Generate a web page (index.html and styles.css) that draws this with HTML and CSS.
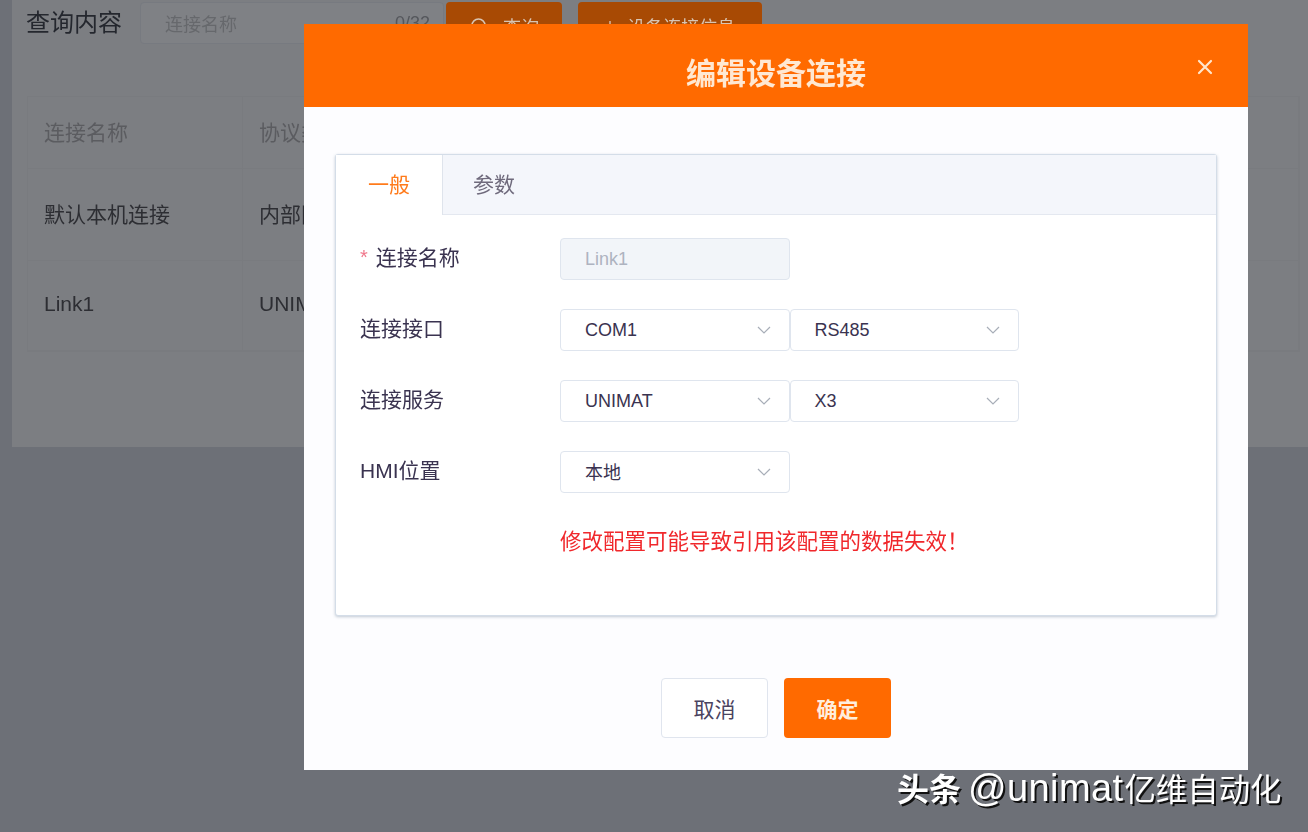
FILE: index.html
```html
<!DOCTYPE html>
<html lang="zh-CN">
<head>
<meta charset="utf-8">
<title>编辑设备连接</title>
<link rel="stylesheet" href="styles.css">
</head>
<body>
<div class="page">
  <main class="panel">
    <div class="toolbar">
      <span class="query-label">查询内容</span>
      <div class="search-input"><span class="placeholder">连接名称</span><span class="counter">0/32</span></div>
      <button class="bg-btn btn-search">
        <svg class="search-icon" viewBox="0 0 20 20" width="20" height="20"><circle cx="9.5" cy="9.5" r="6.5" fill="none" stroke="currentColor" stroke-width="1.5"/><path d="M14.5 14.5 18 18" fill="none" stroke="currentColor" stroke-width="1.5"/></svg>
        <span>查询</span>
      </button>
      <button class="bg-btn btn-add"><span class="plus">+</span><span>设备连接信息</span></button>
    </div>
    <div class="table">
      <div class="cell head">连接名称</div><div class="cell head">协议类型</div><div class="cell head"></div>
      <div class="cell strong">默认本机连接</div><div class="cell strong">内部网络</div><div class="cell"></div>
      <div class="cell strong">Link1</div><div class="cell strong">UNIMAT</div><div class="cell"></div>
    </div>
  </main>
</div>

<section class="modal">
  <header class="modal-head">
    <h1 class="modal-title">编辑设备连接</h1>
    <svg class="close" viewBox="0 0 16 16" width="16" height="16"><path d="M2 2 14 14M14 2 2 14" fill="none" stroke="#ffe6cc" stroke-width="2.2" stroke-linecap="round"/></svg>
  </header>
  <div class="modal-body">
    <div class="tabs">
      <div class="tab-bar">
        <div class="tab active">一般</div>
        <div class="tab second">参数</div>
      </div>
      <div class="tab-content">
        <div class="row">
          <label class="label"><span class="req">*</span>连接名称</label>
          <div class="field disabled">Link1</div>
        </div>
        <div class="row">
          <label class="label">连接接口</label>
          <div class="field">COM1<svg class="chev" viewBox="0 0 14 8" width="14" height="8"><path d="M1 1 7 7 13 1"/></svg></div>
          <div class="field">RS485<svg class="chev" viewBox="0 0 14 8" width="14" height="8"><path d="M1 1 7 7 13 1"/></svg></div>
        </div>
        <div class="row">
          <label class="label">连接服务</label>
          <div class="field">UNIMAT<svg class="chev" viewBox="0 0 14 8" width="14" height="8"><path d="M1 1 7 7 13 1"/></svg></div>
          <div class="field">X3<svg class="chev" viewBox="0 0 14 8" width="14" height="8"><path d="M1 1 7 7 13 1"/></svg></div>
        </div>
        <div class="row">
          <label class="label">HMI位置</label>
          <div class="field"><span class="cjk-value">本地</span><svg class="chev" viewBox="0 0 14 8" width="14" height="8"><path d="M1 1 7 7 13 1"/></svg></div>
        </div>
        <p class="warning">修改配置可能导致引用该配置的数据失效！</p>
      </div>
    </div>
    <div class="actions">
      <button class="btn btn-cancel">取消</button>
      <button class="btn btn-ok">确定</button>
    </div>
  </div>
</section>

<div class="watermark"><b class="wm-brand">头条</b><span class="wm-latin">@unimat</span><span class="wm-cjk">亿维自动化</span></div>
</body>
</html>
```
FILE: styles.css
```css
* { box-sizing: border-box; }
html, body { margin: 0; height: 100%; }
body {
  width: 1308px;
  height: 832px;
  overflow: hidden;
  background: #6d7077;
  font-family: "Liberation Sans", "Noto Sans CJK SC", sans-serif;
  color: #3a3350;
}
.page { height: 447px; padding-left: 12px; }
.panel {
  height: 447px;
  background: #7c7e82;
  padding: 2px 0 0 14px;
  filter: blur(0.7px);
  overflow: hidden;
}
.toolbar { display: flex; align-items: center; height: 42px; }
.query-label { width: 114px; font-size: 24px; color: #24272e; margin-bottom: 6px; }
.search-input {
  width: 304px;
  height: 42px;
  display: flex;
  align-items: center;
  justify-content: space-between;
  padding: 0 13px 0 24px;
  border: 1px solid #777a80;
  border-radius: 4px;
  background: #7f8185;
  font-size: 18px;
}
.placeholder { color: #66686c; }
.counter { color: #55575c; font-size: 18px; }
.bg-btn {
  height: 42px;
  display: flex;
  align-items: center;
  justify-content: center;
  padding: 6px 0 0;
  border: 0;
  border-radius: 4px;
  background: #a84a04;
  color: #d9c5b3;
  font: inherit;
  font-size: 18px;
}
.btn-search { width: 116px; margin-left: 2px; gap: 14px; }
.btn-add { width: 184px; margin-left: 16px; gap: 12px; }
.search-icon { flex: none; }
.table {
  margin: 52px 8px 0 1px;
  display: grid;
  grid-template-columns: 215px 216px 1fr;
  grid-template-rows: 72px 92px 90px;
  border: 1px solid #797b7f;
}
.cell {
  display: flex;
  align-items: center;
  padding: 0 0 3px 16px;
  font-size: 21px;
  border-right: 1px solid #797b7f;
  border-bottom: 1px solid #797b7f;
  white-space: nowrap;
}
.cell.head { color: #5b5c60; }
.cell.strong { color: #2d2e33; }

.modal {
  position: fixed;
  left: 304px;
  top: 24px;
  width: 944px;
  height: 746px;
  background: #fff;
  border-radius: 2px;
  display: flex;
  flex-direction: column;
}
.modal-head {
  position: relative;
  height: 83px;
  flex: none;
  padding-top: 10px;
  background: #ff6a00;
  display: flex;
  align-items: center;
  justify-content: center;
}
.modal-title {
  margin: 0;
  font-size: 30px;
  font-weight: 700;
  color: #ffe8d2;
  font-family: "Noto Sans CJK SC", sans-serif;
  line-height: 1;
  filter: blur(0.5px);
}
.close { position: absolute; right: 35px; top: 35px; }
.modal-body { flex: 1; padding: 47px 31px 0; display: flex; flex-direction: column; background: #fdfdff; }
.tabs {
  height: 462px;
  flex: none;
  border: 1px solid #d4dde8;
  border-radius: 3px;
  box-shadow: 0 1px 3px rgba(120, 140, 160, .45);
  display: flex;
  flex-direction: column;
  background: #fff;
}
.tab-bar {
  height: 60px;
  flex: none;
  display: flex;
  background: #f4f6fb;
  border-bottom: 1px solid #e4e8f0;
}
.tab {
  width: 107px;
  padding-left: 32px;
  font-size: 21px;
  line-height: 60px;
  color: #6f6a7c;
  filter: blur(0.4px);
}
.tab.second { padding-left: 30px; }
.tab.active {
  background: #fff;
  color: #ff7a1a;
  border-right: 1px solid #dfe4ec;
  height: 60px;
}
.tab-content { padding: 23px 0 0 24px; display: flex; flex-direction: column; gap: 29px; }
.row { display: flex; height: 42px; align-items: center; }
.label {
  width: 200px;
  flex: none;
  font-size: 21px;
  color: #3a3350;
  white-space: nowrap;
  margin-bottom: 6px;
  filter: blur(0.4px);
}
.req { color: #f0788c; font-size: 20px; margin-right: 8px; vertical-align: 1px; }
.field {
  width: 229.5px;
  height: 42px;
  flex: none;
  display: flex;
  align-items: center;
  justify-content: space-between;
  padding: 0 18px 0 24px;
  border: 1px solid #dfe5ee;
  border-radius: 4px;
  font-size: 18px;
  color: #3a3350;
  background: #fff;
}
.field.disabled { background: #f2f5f9; color: #aeb3c0; }
.cjk-value { margin-bottom: 3px; }
.chev { fill: none; stroke: #a8aeb8; stroke-width: 1.2; flex: none; }
.warning {
  margin: 5px 0 0 200px;
  font-size: 21.5px;
  line-height: 30px;
  color: #f0282c;
  white-space: nowrap;
  filter: blur(0.4px);
}
.actions { display: flex; justify-content: center; gap: 16px; margin-top: 62px; }
.btn {
  width: 107px;
  height: 60px;
  border-radius: 4px;
  font-family: inherit;
  font-size: 21px;
}
.btn-cancel { background: #fff; border: 1px solid #e0e5ee; color: #4a4360; }
.btn-ok { background: #ff6a00; border: 0; color: #ffeedd; font-weight: 700; }
.watermark {
  position: fixed;
  left: 897px;
  top: 766px;
  display: flex;
  align-items: baseline;
  line-height: 44px;
  color: #fff;
  white-space: nowrap;
  text-shadow: 2px 2px 0 #111;
}
.wm-brand { font-size: 32px; margin-right: 7px; }
.wm-latin { font-size: 38px; letter-spacing: 0.4px; }
.wm-cjk { font-size: 31.4px; margin-left: 1px; }
```
